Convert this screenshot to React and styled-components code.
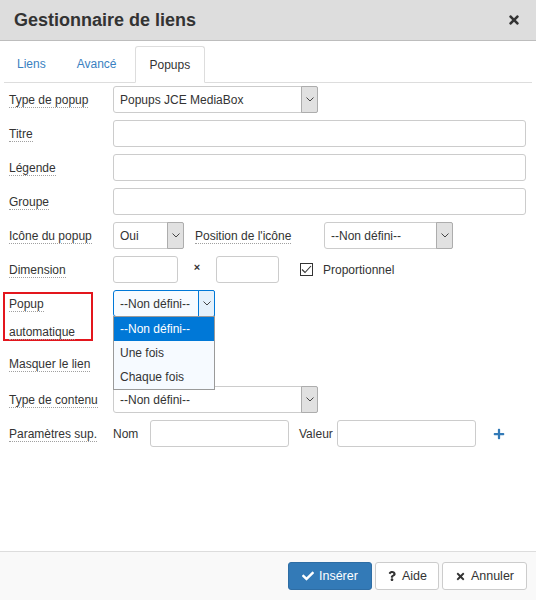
import React from 'react';
import styled, { createGlobalStyle, css } from 'styled-components';
import { FaCheck, FaQuestion, FaTimes, FaPlus } from 'react-icons/fa';

const GlobalStyle = createGlobalStyle`
  html, body {
    margin: 0;
    padding: 0;
    background: #fff;
  }

  body {
    font-family: "Liberation Sans", Arial, sans-serif;
    font-size: 12px;
    color: #333;
  }

  * {
    box-sizing: border-box;
  }
`;

const Dialog = styled.div`
  width: 536px;
  height: 600px;
  display: flex;
  flex-direction: column;
  background: #fff;
`;

const Header = styled.header`
  height: 41px;
  flex: none;
  display: flex;
  align-items: center;
  justify-content: space-between;
  padding: 0 15px 0 14px;
  background: #dddddd;
  border-bottom: 1px solid #bdbdbd;
`;

const Title = styled.h1`
  margin: 0;
  font-size: 18px;
  font-weight: bold;
  color: #333;
`;

const CloseButton = styled.button`
  border: 0;
  padding: 0;
  background: none;
  color: #333;
  display: flex;
  cursor: pointer;
`;

const Body = styled.div`
  flex: 1;
  padding: 5px 4px 0;
`;

const TabList = styled.ul`
  list-style: none;
  margin: 0;
  padding: 0;
  display: flex;
  border-bottom: 1px solid #dddddd;
`;

const Tab = styled.li`
  height: 36px;
  padding: 0 12px;
  margin-right: 5px;
  display: flex;
  align-items: center;
  color: #3a7fc1;
  border: 1px solid transparent;
  border-radius: 3px 3px 0 0;

  ${({ $active }) =>
    $active &&
    css`
      height: 37px;
      padding: 0 14px;
      margin-bottom: -1px;
      color: #333;
      background: #fff;
      border-color: #dddddd;
      border-bottom-color: #fff;
    `}
`;

const Form = styled.div`
  padding: 3px 6px 0 5px;
  display: flex;
  flex-direction: column;
  gap: 7px;
`;

const Row = styled.div`
  display: flex;
  align-items: ${({ $top }) => ($top ? 'flex-start' : 'center')};
  min-height: ${({ $height }) => $height || 27}px;
`;

const Label = styled.div`
  width: 104px;
  flex: none;
`;

const LabelText = styled.span`
  border-bottom: 1px dotted #a0a0a0;
`;

const Flagged = styled.div`
  margin: 2px 0 0 -6px;
  width: 90px;
  height: 49px;
  padding-left: 4px;
  border: 2px solid #e3161d;
  line-height: 28px;

  & > span {
    display: block;
    margin-top: -4px;
  }
`;

const SubLabel = styled.span`
  flex: none;
  width: ${({ $width }) => $width}px;
  margin-left: ${({ $gap }) => $gap || 0}px;
`;

const Input = styled.input`
  height: 27px;
  width: ${({ $width }) => ($width ? `${$width}px` : 'auto')};
  flex: ${({ $width }) => ($width ? 'none' : '1')};
  border: 1px solid #cccccc;
  border-radius: 3px;
  background: #fff;
  font: inherit;
  padding: 0 6px;
  min-width: 0;
`;

const SelectBox = styled.div`
  position: relative;
  flex: none;
  width: ${({ $width }) => $width}px;
  height: 27px;
  display: flex;
  align-items: center;
  border: 1px solid ${({ $open }) => ($open ? '#0078d7' : '#cccccc')};
  border-radius: 3px;
  background: ${({ $open }) => ($open ? '#f7fbff' : '#fff')};
  color: #333;
`;

const SelectValue = styled.span`
  flex: 1;
  padding-left: 6px;
  white-space: nowrap;
  overflow: hidden;
`;

const Arrow = styled.span`
  width: 17px;
  align-self: stretch;
  margin: -1px -1px -1px 0;
  display: flex;
  align-items: center;
  justify-content: center;
  border: 1px solid ${({ $open }) => ($open ? '#0078d7' : '#adadad')};
  background: ${({ $open }) => ($open ? '#e5f1fb' : '#e1e1e1')};
  border-radius: 0 2px 2px 0;
`;

const OptionList = styled.ul`
  position: absolute;
  top: 100%;
  left: -1px;
  right: -1px;
  z-index: 10;
  list-style: none;
  margin: 0;
  padding: 0;
  border: 1px solid #9a9a9a;
  background: #f6faff;
`;

const Option = styled.li`
  height: 24px;
  line-height: 24px;
  padding-left: 6px;
  color: ${({ $selected }) => ($selected ? '#fff' : '#333')};
  background: ${({ $selected }) => ($selected ? '#0078d7' : 'transparent')};
`;

const Times = styled.span`
  width: 38px;
  flex: none;
  text-align: center;
  font-weight: bold;
  font-size: 11px;
  margin-top: -6px;
`;

const Checkbox = styled.span`
  width: 13px;
  height: 13px;
  flex: none;
  margin: 0 10px 0 21px;
  border: 1px solid #333;
  background: #fff;
  display: flex;
  align-items: center;
  justify-content: center;
`;

const AddButton = styled.button`
  margin-left: 17px;
  border: 0;
  padding: 0;
  background: none;
  color: #337ab7;
  display: flex;
`;

const Footer = styled.footer`
  flex: none;
  height: 49px;
  display: flex;
  align-items: center;
  justify-content: flex-end;
  gap: 3px;
  padding: 0 9px 0 0;
  background: #f9f9f9;
  border-top: 1px solid #dddddd;
`;

const Button = styled.button`
  height: 28px;
  display: flex;
  align-items: center;
  gap: 5px;
  padding: 0 ${({ $pad }) => $pad || 12}px;
  font: inherit;
  font-size: 12.5px;
  border-radius: 3px;
  border: 1px solid ${({ $primary }) => ($primary ? '#2e6da4' : '#cccccc')};
  background: ${({ $primary }) => ($primary ? '#337ab7' : '#fff')};
  color: ${({ $primary }) => ($primary ? '#fff' : '#333')};
`;

const Chevron = () => (
  <svg width="8" height="5" viewBox="0 0 8 5">
    <path d="M0.5 0.5 L4 4 L7.5 0.5" fill="none" stroke="#444" strokeWidth="1" />
  </svg>
);

const Select = ({ width, value, open, options }) => (
  <SelectBox $width={width} $open={open}>
    <SelectValue>{value}</SelectValue>
    <Arrow $open={open}>
      <Chevron />
    </Arrow>
    {open && (
      <OptionList>
        {options.map((option, i) => (
          <Option key={option} $selected={i === 0}>
            {option}
          </Option>
        ))}
      </OptionList>
    )}
  </SelectBox>
);

const Field = ({ label, children, ...rest }) => (
  <Row {...rest}>
    <Label>
      <LabelText>{label}</LabelText>
    </Label>
    {children}
  </Row>
);

const App = () => (
  <>
    <GlobalStyle />
    <Dialog>
      <Header>
        <Title>Gestionnaire de liens</Title>
        <CloseButton>
          <FaTimes size={14} />
        </CloseButton>
      </Header>

      <Body>
        <TabList>
          <Tab>Liens</Tab>
          <Tab>Avancé</Tab>
          <Tab $active>Popups</Tab>
        </TabList>

        <Form>
          <Field label="Type de popup">
            <Select width={205} value="Popups JCE MediaBox" />
          </Field>
          <Field label="Titre">
            <Input />
          </Field>
          <Field label="Légende">
            <Input />
          </Field>
          <Field label="Groupe">
            <Input />
          </Field>
          <Field label="Icône du popup">
            <Select width={71} value="Oui" />
            <SubLabel $width={129} $gap={11}>
              <LabelText>Position de l'icône</LabelText>
            </SubLabel>
            <Select width={129} value="--Non défini--" />
          </Field>
          <Field label="Dimension">
            <Input $width={65} />
            <Times>×</Times>
            <Input $width={63} />
            <Checkbox>
              <svg width="11" height="9" viewBox="0 0 11 9">
                <path d="M1 4.5 L4 7.5 L10 1" fill="none" stroke="#333" strokeWidth="1.1" />
              </svg>
            </Checkbox>
            <span>Proportionnel</span>
          </Field>
          <Row $top>
            <Label>
              <Flagged>
                <span>
                  <LabelText>Popup automatique</LabelText>
                </span>
              </Flagged>
            </Label>
            <Select
              width={102}
              value="--Non défini--"
              open
              options={['--Non défini--', 'Une fois', 'Chaque fois']}
            />
          </Row>
          {/* its own select sits under the open option list */}
          <Field label="Masquer le lien" $height={31} />
          <Field label="Type de contenu">
            <Select width={205} value="--Non défini--" />
          </Field>
          <Field label="Paramètres sup.">
            <SubLabel $width={37}>Nom</SubLabel>
            <Input $width={139} />
            <SubLabel $width={38} $gap={10}>
              Valeur
            </SubLabel>
            <Input $width={139} />
            <AddButton>
              <FaPlus size={12} />
            </AddButton>
          </Field>
        </Form>
      </Body>

      <Footer>
        <Button $primary $pad={13}>
          <FaCheck size={12} />
          Insérer
        </Button>
        <Button $pad={11}>
          <FaQuestion size={10} />
          Aide
        </Button>
        <Button>
          <FaTimes size={11} />
          Annuler
        </Button>
      </Footer>
    </Dialog>
  </>
);

export default App;
